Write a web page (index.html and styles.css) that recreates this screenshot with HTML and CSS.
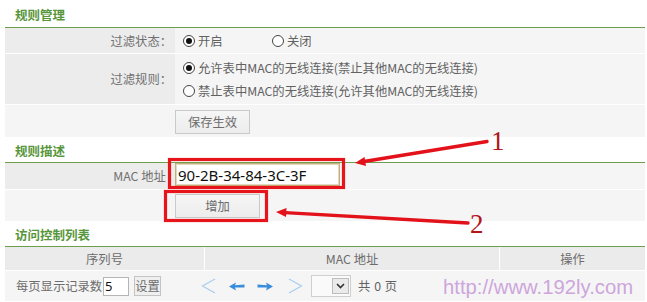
FILE: index.html
```html
<!DOCTYPE html>
<html lang="zh-CN">
<head>
<meta charset="utf-8">
<title>无线MAC地址过滤</title>
<link rel="stylesheet" href="styles.css">
</head>
<body>
<div class="page">
  <section class="sec">
    <div class="sec-title first">规则管理</div>
    <div class="row r1">
      <div class="lbl">过滤状态：</div>
      <div class="val pad">
        <label class="opt w89"><span class="radio on"></span>开启</label>
        <label class="opt"><span class="radio"></span>关闭</label>
      </div>
    </div>
    <div class="row r2">
      <div class="lbl">过滤规则：</div>
      <div class="val pad stack">
        <label class="opt"><span class="radio on"></span>允许表中MAC的无线连接(禁止其他MAC的无线连接)</label>
        <label class="opt"><span class="radio"></span>禁止表中MAC的无线连接(允许其他MAC的无线连接)</label>
      </div>
    </div>
    <div class="row r3 plain">
      <div class="lbl"></div>
      <div class="val"><button class="btn save">保存生效</button></div>
    </div>
  </section>

  <section class="sec">
    <div class="sec-title">规则描述</div>
    <div class="row rmac">
      <div class="lbl">MAC 地址 :</div>
      <div class="val top"><input class="mac" type="text" value="90-2B-34-84-3C-3F"></div>
    </div>
    <div class="row radd plain">
      <div class="lbl"></div>
      <div class="val"><button class="btn add">增加</button></div>
    </div>
  </section>

  <section class="sec">
    <div class="sec-title">访问控制列表</div>
    <div class="thead">
      <div class="th c1">序列号</div>
      <div class="th c2">MAC 地址</div>
      <div class="th c3">操作</div>
    </div>
    <div class="pager">
      <span class="pp">每页显示记录数</span>
      <input class="num" type="text" value="5">
      <button class="btn set">设置</button>
      <svg class="pg first" width="15" height="16" viewBox="0 0 15 16"><path d="M14 1 L1.5 8 L14 15" fill="none" stroke="#a9cdee" stroke-width="1.2"/></svg>
      <svg class="pg prev" width="16" height="9" viewBox="0 0 16 9"><path d="M0 4.5 L7 0.5 L6 3.3 L15.5 2.6 L15.5 5.6 L6 5.4 L7 8.5 Z" fill="#3a8ddb"/></svg>
      <svg class="pg next" width="16" height="9" viewBox="0 0 16 9"><path d="M16 4.5 L9 0.5 L10 3.3 L0.5 2.6 L0.5 5.6 L10 5.4 L9 8.5 Z" fill="#3a8ddb"/></svg>
      <svg class="pg last" width="15" height="16" viewBox="0 0 15 16"><path d="M1 1 L13.5 8 L1 15" fill="none" stroke="#a9cdee" stroke-width="1.2"/></svg>
      <span class="sel"><span class="sel-box"></span><span class="sel-btn"><svg width="9" height="6" viewBox="0 0 9 6"><path d="M1 1 L4.5 4.5 L8 1" fill="none" stroke="#333" stroke-width="1.6"/></svg></span></span>
      <span class="total">共 0 页</span>
    </div>
  </section>
</div>

<div class="watermark">http://www.192ly.com</div>

<svg class="annot" width="647" height="302" viewBox="0 0 647 302">
  <rect x="169.5" y="159.5" width="174" height="28" fill="none" stroke="#e8141b" stroke-width="3.2"/>
  <rect x="165.5" y="191.5" width="101" height="29" fill="none" stroke="#e8141b" stroke-width="3.2"/>
  <line x1="487" y1="141.5" x2="364" y2="161.5" stroke="#e31119" stroke-width="3.4" stroke-linecap="round"/>
  <polygon points="355,163 366,166 364.5,157" fill="#e31119"/>
  <line x1="468" y1="223" x2="285" y2="212.6" stroke="#e31119" stroke-width="3.4" stroke-linecap="round"/>
  <polygon points="276,212 286.5,208 286,217" fill="#e31119"/>
  <text x="491" y="150" class="num-annot">1</text>
  <text x="470" y="233" class="num-annot">2</text>
</svg>
</body>
</html>
```

FILE: styles.css
```css
html, body {
  margin: 0;
  padding: 0;
  background: #fff;
}
body {
  position: relative;
  width: 647px;
  height: 302px;
  overflow: hidden;
  font-family: "Noto Sans CJK SC", "Noto Sans", sans-serif;
  font-size: 12.3px;
  color: #6c6c6c;
}
.page {
  margin-left: 5px;
  width: 640px;
}
.sec-title {
  height: 25px;
  line-height: 27px;
  padding-left: 10px;
  border-bottom: 1px solid #6c9e4c;
  color: #58963b;
  font-weight: bold;
  font-size: 12.5px;
}
.sec-title.first {
  height: 27px;
  line-height: 30px;
}
.row {
  display: flex;
  border-bottom: 1px solid #fff;
}
.lbl {
  width: 170px;
  flex: none;
  background: #ececec;
  display: flex;
  align-items: center;
  justify-content: flex-end;
  padding-right: 3px;
  box-sizing: border-box;
  color: #707070;
}
.val {
  flex: 1;
  background: #f5f5f5;
  display: flex;
  align-items: center;
  color: #626262;
}
.val.pad { padding-left: 8px; }
.val.top { align-items: flex-start; }
.val.stack {
  flex-direction: column;
  align-items: flex-start;
  justify-content: center;
  gap: 7px;
}
.plain .lbl { background: #f5f5f5; }
.r1 { height: 25px; }
.r2 { height: 50px; }
.r3 { height: 32px; border-bottom: 0; }
.rmac { height: 26px; }
.radd { height: 31px; border-bottom: 0; }

.opt {
  display: inline-flex;
  align-items: center;
  gap: 3px;
  height: 16px;
  white-space: nowrap;
}
.opt.w89 { width: 89px; }
.radio {
  width: 12px;
  height: 12px;
  box-sizing: border-box;
  border: 1px solid #444;
  border-radius: 50%;
  background: #fff;
  display: inline-flex;
  align-items: center;
  justify-content: center;
}
.radio.on::after {
  content: "";
  width: 6px;
  height: 6px;
  border-radius: 50%;
  background: #111;
}
.btn {
  font-family: "Noto Sans CJK SC", "Noto Sans", sans-serif;
  font-size: 12.3px;
  color: #6c6c6c;
  background: linear-gradient(#f6f6f6, #ececec);
  border: 1px solid #c9c9c9;
  padding: 0;
  margin: 0;
}
.btn.save { width: 75px; height: 24px; margin-top: 1px; }
.btn.add { width: 85px; height: 24px; }
.mac {
  width: 165px;
  height: 23px;
  box-sizing: border-box;
  border: 1px solid #c4ae7e;
  box-shadow: inset 0 0 0 1px #e4d9bd;
  background: #fff;
  padding: 0 0 0 2px;
  margin: 0;
  font-family: "Noto Sans", "DejaVu Sans", sans-serif;
  font-size: 15px;
  color: #111;
  outline: none;
}

.thead {
  display: flex;
  height: 23px;
  border-bottom: 1px solid #fff;
  background: #ebebeb;
}
.th {
  display: flex;
  align-items: center;
  justify-content: center;
  color: #6c6c6c;
}
.c1 { width: 199px; border-right: 1px solid #fff; }
.c2 { width: 294px; border-right: 1px solid #fff; }
.c3 { flex: 1; }

.pager {
  display: flex;
  align-items: center;
  height: 30px;
  background: #f5f5f5;
  padding-left: 11px;
}
.pp { color: #6c6c6c; }
.num {
  width: 26px;
  height: 19px;
  box-sizing: border-box;
  margin: 0 0 0 1px;
  padding: 0 0 0 1px;
  border: 1px solid #b5b5b5;
  background: #fff;
  font-family: "Noto Sans", sans-serif;
  font-size: 13px;
  color: #111;
}
.btn.set {
  width: 27px;
  height: 20px;
  margin-left: 5px;
  background: #efefef;
  border: 1px solid #c4c4c4;
}
.pg { display: block; flex: none; }
.pg.first { margin-left: 40px; }
.pg.prev { margin-left: 13px; }
.pg.next { margin-left: 12px; }
.pg.last { margin-left: 15px; }
.sel {
  display: flex;
  margin-left: 8px;
  width: 40px;
  height: 22px;
  box-sizing: border-box;
  border: 1px solid #cfcfcf;
  background: #fafafa;
}
.sel-box { flex: 1; }
.sel-btn {
  width: 15px;
  margin: 2px 1px 2px 0;
  border: 1px solid #bdbdbd;
  background: #eaeaea;
  display: flex;
  align-items: center;
  justify-content: center;
}
.sel-btn svg { display: block; }
.total {
  margin-left: 7px;
  color: #626262;
  word-spacing: 1px;
}
.watermark {
  position: absolute;
  left: 443px;
  top: 277px;
  font-family: "Liberation Sans", Arial, sans-serif;
  font-size: 20.3px;
  line-height: 20px;
  color: #cda6dc;
  white-space: nowrap;
}
.annot {
  position: absolute;
  left: 0;
  top: 0;
  pointer-events: none;
}
.num-annot {
  font-family: "Liberation Serif", serif;
  font-size: 27px;
  fill: #b3141a;
}
```
